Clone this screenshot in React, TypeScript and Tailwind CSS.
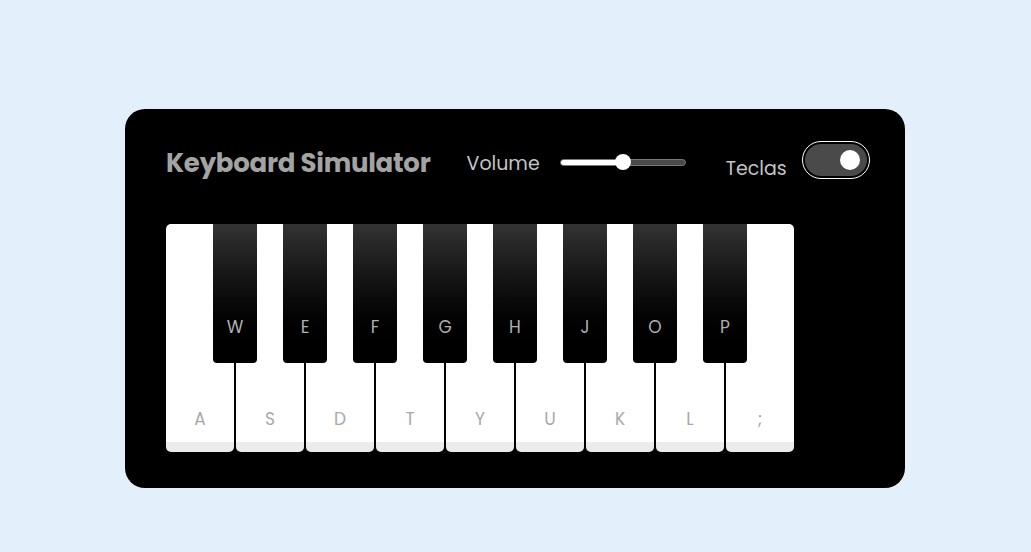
const WHITE = ['A', 'S', 'D', 'T', 'Y', 'U', 'K', 'L', ';']
const BLACK = ['W', 'E', 'F', 'G', 'H', 'J', 'O', 'P']

export default function App() {
  return (
    <div className="w-[1031px] h-[552px] bg-[#e3f0fc] pl-[125px] pt-[109px] font-['Poppins','Open_Sans',sans-serif]">
      <div className="w-[780px] h-[379px] bg-black rounded-[20px] pl-[41px] pr-[36px] pt-[32px] flex flex-col">
        {/* Header */}
        <div className="flex items-center h-[38px] whitespace-nowrap">
          <h1 className="shrink-0 mt-[6px] text-[26px] font-bold text-[#a3a3a3] tracking-[-0.25px] leading-none">Keyboard Simulator</h1>
          <span className="shrink-0 ml-[36px] mt-[6px] text-[19px] text-[#c4c4c4] leading-none">Volume</span>
          <div className="shrink-0 ml-[20px] mt-[4px] relative w-[126px] h-[16px] flex items-center">
            <div className="w-full h-[7px] rounded-full bg-[#4a4a4a] border border-[#777] overflow-hidden">
              <div className="w-[63px] h-full bg-white" />
            </div>
            <div className="absolute left-[55px] top-0 w-[16px] h-[16px] rounded-full bg-white" />
          </div>
          <span className="shrink-0 ml-[40px] mt-[16px] text-[19px] text-[#c4c4c4] leading-none">Teclas</span>
          <div className="shrink-0 ml-[15px] w-[68px] h-[38px] rounded-full border border-white p-[2px]">
            <div className="w-full h-full rounded-full bg-[#4a4a4a] flex items-center justify-end pr-[7px]">
              <div className="w-[20px] h-[20px] rounded-full bg-white" />
            </div>
          </div>
        </div>

        {/* Keys */}
        <div className="relative mt-[45px] w-[628px] h-[228px] flex gap-[2px]">
          {WHITE.map((k, i) => (
            <div
              key={k}
              className={`w-[68px] h-full bg-white rounded-b-[5px] border-b-[10px] border-[#ebebeb] flex items-end justify-center pb-[10px] text-[17px] text-[#a8a8a8] ${
                i === 0 ? 'rounded-tl-[5px]' : ''
              } ${i === WHITE.length - 1 ? 'rounded-tr-[5px]' : ''}`}
            >
              {k}
            </div>
          ))}
          {BLACK.map((k, i) => (
            <div
              key={k}
              className="absolute top-0 w-[44px] h-[139px] rounded-b-[4px] bg-gradient-to-b from-[#333333] to-[#000000] flex items-end justify-center pb-[23px] text-[17px] text-[#b0b0b0]"
              style={{ left: 70 * (i + 1) - 1 - 22 }}
            >
              {k}
            </div>
          ))}
        </div>
      </div>
    </div>
  )
}
